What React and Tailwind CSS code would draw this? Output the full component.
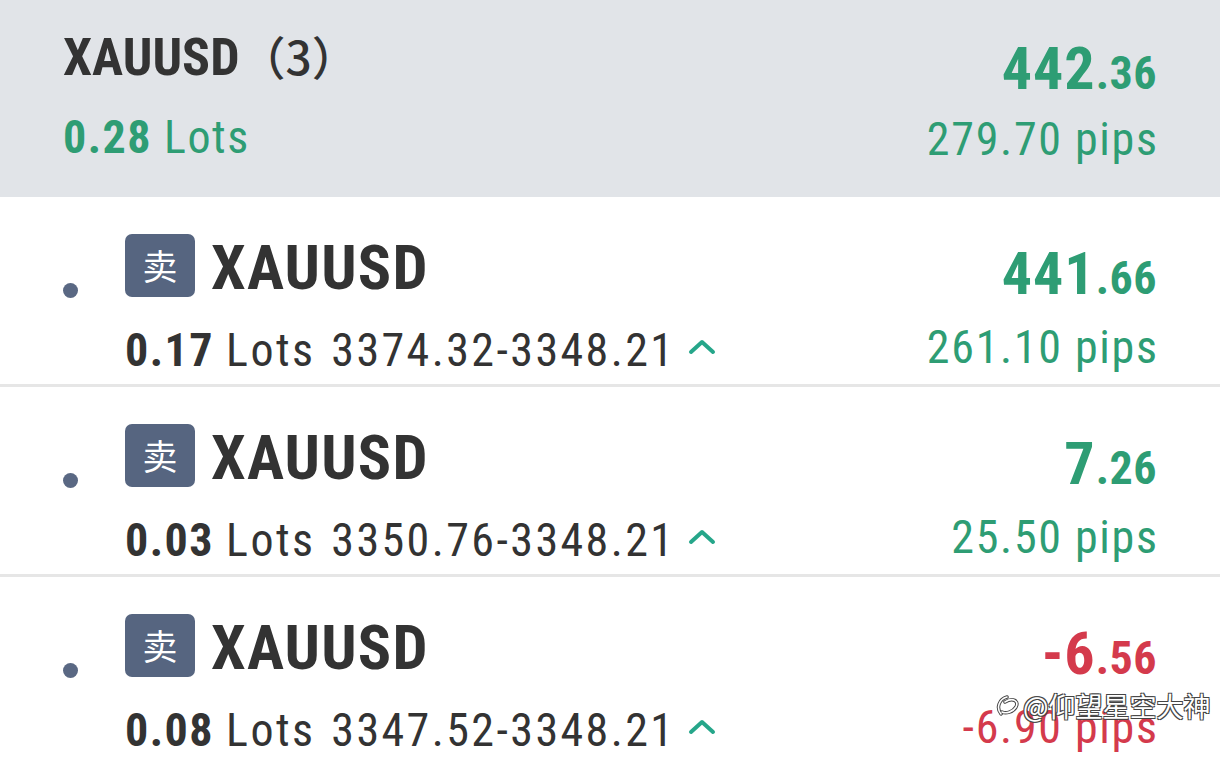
import React from "react";

const rows = [
  { lots: "0.17", range: "3374.32-3348.21", big: "441", small: ".66", pips: "261.10 pips", up: true },
  { lots: "0.03", range: "3350.76-3348.21", big: "7", small: ".26", pips: "25.50 pips", up: true },
  { lots: "0.08", range: "3347.52-3348.21", big: "-6", small: ".56", pips: "-6.90 pips", up: false },
];

function Caret() {
  return (
    <svg width="28" height="18" viewBox="0 0 28 18" className="ml-[13px] self-start mt-[10px]">
      <path d="M3 15 L14 5 L25 15" fill="none" stroke="#26a68a" strokeWidth="4" strokeLinecap="round" strokeLinejoin="round" />
    </svg>
  );
}

function Amount({ big, small }) {
  return (
    <div className="flex items-baseline font-bold leading-none tracking-[1px]">
      <span className="text-[60px]">{big}</span>
      <span className="text-[46px] tracking-[0.5px]">{small}</span>
    </div>
  );
}

function Row({ r, last }) {
  const color = r.up ? "text-[#2e9d74]" : "text-[#d43a4c]";
  return (
    <div className={`flex h-[190px] pr-[63px] ${last ? "" : "border-b-[3px] border-[#e6e6e6]"}`}>
      <div className="w-[125px] pl-[63px] pt-[86px]">
        <div className="w-[15px] h-[15px] rounded-full bg-[#5a6883]" />
      </div>
      <div className="flex-1 flex flex-col pt-[37px]">
        <div className="flex items-start">
          <div className="w-[70px] h-[63px] rounded-[7px] bg-[#566580] flex items-center justify-center text-white text-[35px] font-['Noto_Sans_CJK_SC',sans-serif]">
            卖
          </div>
          <div className="ml-[16px] mt-[3px] text-[62px] font-bold text-[#333333] leading-none tracking-[1.2px]">XAUUSD</div>
        </div>
        <div className="mt-[28px] flex items-start text-[#333333] text-[46px] leading-none tracking-[2.4px]">
          <span className="font-bold tracking-[1.5px]">{r.lots}</span>
          <span className="ml-[12px]">Lots</span>
          <span className="ml-[16px]">{r.range}</span>
          <Caret />
        </div>
      </div>
      <div className={`flex flex-col items-end pt-[47px] ${color}`}>
        <Amount big={r.big} small={r.small} />
        <div className="mt-[20px] text-[46px] leading-none tracking-[1.7px] -mr-[1.7px]">{r.pips}</div>
      </div>
    </div>
  );
}

export default function App() {
  return (
    <div className="relative w-[1220px] h-[758px] overflow-hidden bg-white font-['Roboto_Condensed','Noto_Sans_CJK_SC',sans-serif]">
      <div className="h-[197px] bg-[#e1e4e8] flex justify-between px-[63px]">
        <div className="flex flex-col pt-[32px]">
          <div className="text-[52px] font-bold text-[#333333] leading-none">
            XAUUSD<span className="font-medium font-['Noto_Sans_CJK_SC',sans-serif] text-[46px]">（3）</span>
          </div>
          <div className="mt-[30px] text-[46px] text-[#2e9d74] leading-none tracking-[1.5px]">
            <span className="font-bold">0.28</span>
            <span className="ml-[12px]">Lots</span>
          </div>
        </div>
        <div className="flex flex-col items-end text-[#2e9d74] pt-[39px]">
          <Amount big="442" small=".36" />
          <div className="mt-[17px] text-[46px] leading-none tracking-[1.7px] -mr-[1.7px]">279.70 pips</div>
        </div>
      </div>
      {rows.map((r, i) => (
        <Row key={i} r={r} last={i === rows.length - 1} />
      ))}
      <div className="absolute left-[994px] top-[691px] flex items-center text-white text-[27px] leading-none font-['Noto_Sans_CJK_SC',sans-serif] [text-shadow:-1px_-1px_0_#444,1px_-1px_0_#444,-1px_1px_0_#444,1px_1px_0_#444]">
        <svg width="28" height="28" viewBox="0 0 28 28" className="mr-[1px]">
          <path d="M7 23 C2 17 5 8 13 6 M11 11 C19 6 25 10 22 16 C19 21 12 23 8 21" fill="none" stroke="#444" strokeWidth="3.5" strokeLinecap="round" />
          <path d="M7 23 C2 17 5 8 13 6 M11 11 C19 6 25 10 22 16 C19 21 12 23 8 21" fill="none" stroke="#fff" strokeWidth="1.6" strokeLinecap="round" />
        </svg>
        <span>@仰望星空大神</span>
      </div>
    </div>
  );
}
